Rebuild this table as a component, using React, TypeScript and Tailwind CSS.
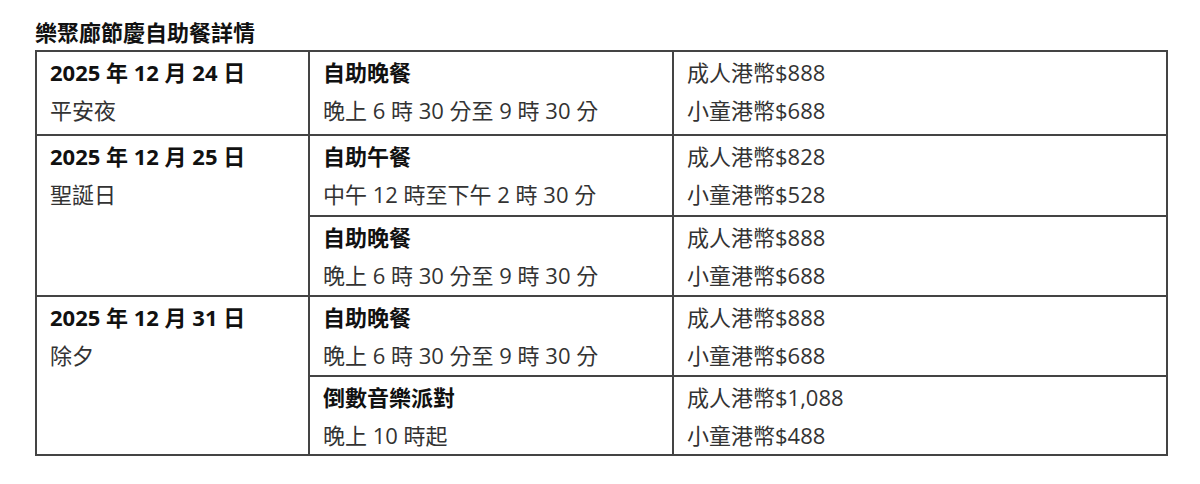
import React from 'react';

type Slot = {
  title: string;
  time: string;
  adult: string;
  child: string;
};

type Day = {
  date: string;
  name: string;
  slots: Slot[];
};

const days: Day[] = [
  {
    date: '2025 年 12 月 24 日',
    name: '平安夜',
    slots: [
      { title: '自助晚餐', time: '晚上 6 時 30 分至 9 時 30 分', adult: '成人港幣$888', child: '小童港幣$688' },
    ],
  },
  {
    date: '2025 年 12 月 25 日',
    name: '聖誕日',
    slots: [
      { title: '自助午餐', time: '中午 12 時至下午 2 時 30 分', adult: '成人港幣$828', child: '小童港幣$528' },
      { title: '自助晚餐', time: '晚上 6 時 30 分至 9 時 30 分', adult: '成人港幣$888', child: '小童港幣$688' },
    ],
  },
  {
    date: '2025 年 12 月 31 日',
    name: '除夕',
    slots: [
      { title: '自助晚餐', time: '晚上 6 時 30 分至 9 時 30 分', adult: '成人港幣$888', child: '小童港幣$688' },
      { title: '倒數音樂派對', time: '晚上 10 時起', adult: '成人港幣$1,088', child: '小童港幣$488' },
    ],
  },
];

// row heights of each sub-row, top to bottom
const rowHeights = ['h-[84px]', 'h-[81px]', 'h-[80px]', 'h-[80px]', 'h-[76px]'];

const cell = 'border-2 border-[#444] align-top pl-[13px] pt-[1px]';
const bold = 'h-[38px] leading-[38px] font-bold text-[#111]';
const plain = 'h-[38px] leading-[38px] text-[#333]';

export default function App() {
  let row = 0;
  return (
    <div
      className="w-[1200px] h-[484px] bg-white pl-[35px] pt-[19px] text-[22px]"
      style={{ fontFamily: '"Open Sans", "Noto Sans CJK TC", sans-serif' }}
    >
      <h2 className="h-[26px] leading-[26px] mb-[5px] font-bold text-[22px] text-[#111]">樂聚廊節慶自助餐詳情</h2>

      <table className="w-[1133px] border-collapse table-fixed">
        <colgroup>
          <col className="w-[273px]" />
          <col className="w-[364px]" />
          <col />
        </colgroup>
        <tbody>
          {days.map((day, di) =>
            day.slots.map((slot, si) => (
              <tr key={`${di}-${si}`} className={rowHeights[row++]}>
                {si === 0 && (
                  <td rowSpan={day.slots.length} className={cell}>
                    <div className={bold}>{day.date}</div>
                    <div className={plain}>{day.name}</div>
                  </td>
                )}
                <td className={cell}>
                  <div className={bold}>{slot.title}</div>
                  <div className={plain}>{slot.time}</div>
                </td>
                <td className={cell}>
                  <div className={plain}>{slot.adult}</div>
                  <div className={plain}>{slot.child}</div>
                </td>
              </tr>
            ))
          )}
        </tbody>
      </table>
    </div>
  );
}
